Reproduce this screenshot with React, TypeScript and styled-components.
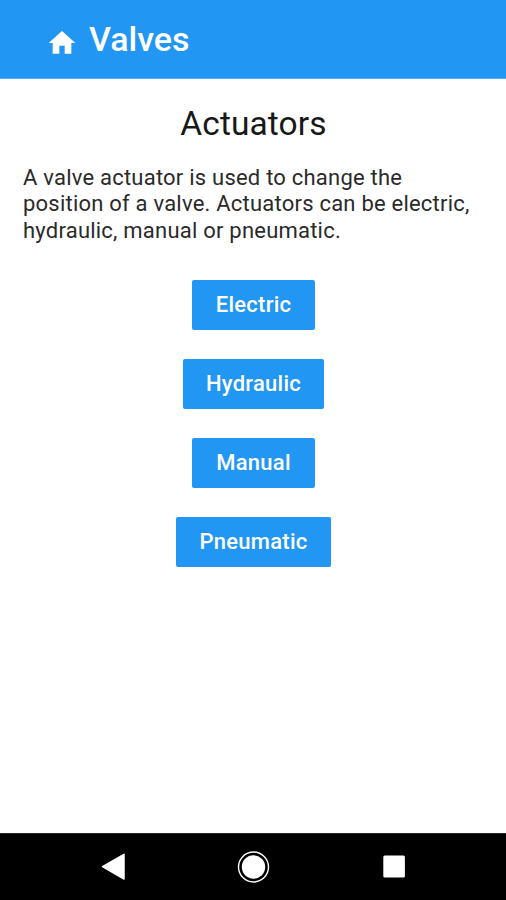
import React from "react";
import styled, { createGlobalStyle } from "styled-components";

const GlobalStyle = createGlobalStyle`
  * { box-sizing: border-box; }
  body { margin: 0; background: #fff; font-family: Roboto, sans-serif; }
`;
const Screen = styled.div`
  display: flex;
  flex-direction: column;
  height: 900px;
  overflow: hidden;
`;
const AppBar = styled.header`
  display: flex;
  align-items: center;
  height: 79px;
  padding-left: 46px;
  background: #2196f3;
  border-bottom: 1px solid #50acf5;
  color: #fff;
`;
const HomeIcon = styled.svg`
  width: 32px;
  height: 32px;
  margin-top: 7px;
  fill: #fff;
`;
const BarTitle = styled.h1`
  margin: 0 0 0 11px;
  font-size: 34px;
  line-height: 40px;
  font-weight: 500;
`;
const Content = styled.main`
  flex: 1;
  display: flex;
  flex-direction: column;
  align-items: center;
  padding: 25px 23px 0;
`;
const Heading = styled.h2`
  margin: 0;
  font-size: 33.5px;
  line-height: 40px;
  font-weight: 400;
  letter-spacing: 0.1px;
  padding-left: 1px;
  color: #181818;
`;
const Description = styled.p`
  align-self: stretch;
  margin: 20.7px 0 0;
  font-size: 22px;
  line-height: 26.7px;
  letter-spacing: 0.22px;
  font-weight: 400;
  color: #2a2a2a;
`;
const ButtonList = styled.div`
  display: flex;
  flex-direction: column;
  align-items: center;
  gap: 28.7px;
  margin-top: 35.7px;
`;
const ActionButton = styled.button<{ $width: number }>`
  width: ${(p) => p.$width}px;
  height: 50px;
  padding: 0 0 0 1px;
  border: 0;
  border-radius: 2px;
  background: #2196f3;
  color: #fff;
  font: 500 22px/26px Roboto, sans-serif;
  letter-spacing: 0.25px;
`;
const NavBar = styled.nav`
  display: grid;
  grid-template-columns: repeat(3, 140.5px);
  justify-content: center;
  place-items: center;
  height: 67px;
  border-top: 1px solid #282828;
  background: #000;
`;
const NavIcon = styled.svg`
  width: 34px;
  height: 34px;
  fill: #fff;
`;

const actuators = [
  { name: "Electric", width: 123 },
  { name: "Hydraulic", width: 141 },
  { name: "Manual", width: 123 },
  { name: "Pneumatic", width: 155 },
];

export default function App() {
  return (
    <Screen>
      <GlobalStyle />
      <AppBar>
        <HomeIcon viewBox="0 0 24 24"><path d="M10 20v-6h4v6h5v-8h3L12 3 2 12h3v8z" /></HomeIcon>
        <BarTitle>Valves</BarTitle>
      </AppBar>
      <Content>
        <Heading>Actuators</Heading>
        <Description>
          A valve actuator is used to change the<br />
          position of a valve. Actuators can be electric,<br />
          hydraulic, manual or pneumatic.
        </Description>
        <ButtonList>
          {actuators.map((a) => <ActionButton key={a.name} $width={a.width}>{a.name}</ActionButton>)}
        </ButtonList>
      </Content>
      <NavBar>
        <NavIcon viewBox="0 0 34 34">
          <path d="M6.500 16.600L28 4.300V29Z" stroke="#fff" strokeWidth="1.500" strokeLinejoin="round" />
        </NavIcon>
        <NavIcon viewBox="0 0 34 34">
          <circle cx="17.500" cy="17" r="15" fill="none" stroke="#fff" strokeWidth="1.400" />
          <circle cx="17.500" cy="17" r="11.700" />
        </NavIcon>
        <NavIcon viewBox="0 0 34 34">
          <rect x="6.300" y="5.500" width="21.600" height="22" rx="1.500" />
        </NavIcon>
      </NavBar>
    </Screen>
  );
}
